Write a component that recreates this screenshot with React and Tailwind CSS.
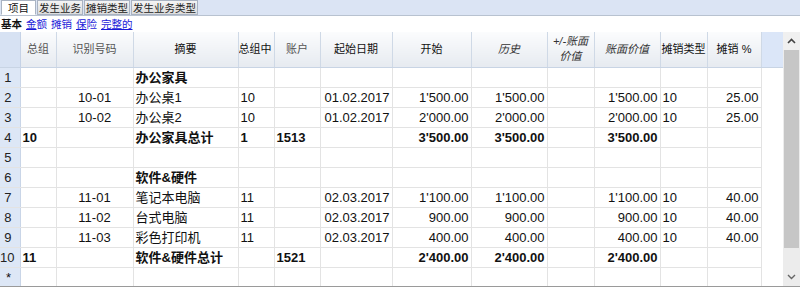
import React from 'react';

const FONT = { fontFamily: '"Liberation Sans", "Noto Sans CJK SC", Arial, sans-serif' };

const COLS = [20, 36, 77, 105, 36, 46, 72, 79, 76, 47, 66, 47, 54, 22];

const rows = [
  { n: '1', desc: '办公家具', bold: true },
  { n: '2', id: '10-01', desc: '办公桌1', g: '10', date: '01.02.2017', open: "1'500.00", hist: "1'500.00", book: "1'500.00", type: '10', pct: '25.00' },
  { n: '3', id: '10-02', desc: '办公桌2', g: '10', date: '01.02.2017', open: "2'000.00", hist: "2'000.00", book: "2'000.00", type: '10', pct: '25.00' },
  { n: '4', grp: '10', desc: '办公家具总计', g: '1', acc: '1513', open: "3'500.00", hist: "3'500.00", book: "3'500.00", total: true },
  { n: '5' },
  { n: '6', desc: '软件&硬件', bold: true },
  { n: '7', id: '11-01', desc: '笔记本电脑', g: '11', date: '02.03.2017', open: "1'100.00", hist: "1'100.00", book: "1'100.00", type: '10', pct: '40.00' },
  { n: '8', id: '11-02', desc: '台式电脑', g: '11', date: '02.03.2017', open: '900.00', hist: '900.00', book: '900.00', type: '10', pct: '40.00' },
  { n: '9', id: '11-03', desc: '彩色打印机', g: '11', date: '02.03.2017', open: '400.00', hist: '400.00', book: '400.00', type: '10', pct: '40.00' },
  { n: '10', grp: '11', desc: '软件&硬件总计', acc: '1521', open: "2'400.00", hist: "2'400.00", book: "2'400.00", total: true },
];

function Tab({ label, active }) {
  return (
    <div className={`h-[15px] text-[10.5px] leading-[14px] border border-[#a9b3c2] ${active ? 'bg-white border-b-white px-[6px]' : 'bg-gradient-to-b from-[#f4f4f4] to-[#dcdcdc] text-[#222] px-[1px]'}`}>
      {label}
    </div>
  );
}

function Hd({ children, className = '' }) {
  return (
    <th className={`h-[35px] p-0 font-normal text-[11px] leading-[15px] whitespace-nowrap overflow-hidden border-r border-[#cfd9e6] border-b border-b-[#c8d4e4] bg-gradient-to-b from-[#fbfcfd] to-[#e6eaf0] ${className}`}>
      {children}
    </th>
  );
}

function Td({ children, className = '' }) {
  return (
    <td className={`h-[20px] p-0 px-[2px] text-[13px] leading-[19px] border-r border-b border-[#e3e3e3] whitespace-nowrap overflow-hidden ${className}`}>
      {children}
    </td>
  );
}

export default function App() {
  return (
    <div className="w-[800px] h-[287px] bg-white text-[#111] overflow-hidden" style={FONT}>
      {/* tabs */}
      <div className="h-[16px] bg-[#dbe4f4] flex items-end gap-[1px] pl-[1px] border-b border-[#b8c2d0]">
        <Tab label="项目" active />
        <Tab label="发生业务" />
        <Tab label="摊销类型" />
        <Tab label="发生业务类型" />
      </div>
      <div className="h-[16px] flex items-center gap-[4px] pl-[1px] text-[10.5px] leading-[14px]">
        <span className="font-bold">基本</span>
        <span className="text-[#1a1ad8]"><u>金</u>额</span>
        <span className="text-[#1a1ad8]">摊销</span>
        <span className="text-[#1a1ad8]"><u>保</u>险</span>
        <span className="text-[#1a1ad8] underline">完整的</span>
      </div>

      <div className="flex h-[255px] border-b border-[#9a9a9a]">
        <div className="w-[783px] overflow-hidden">
          <table className="table-fixed border-collapse w-[783px]">
            <colgroup>
              {COLS.map((w, i) => <col key={i} style={{ width: w }} />)}
            </colgroup>
            <thead>
              <tr>
                <th className="p-0 bg-[#d7e2f3] border-r border-[#c5d2e6] border-b border-b-[#c8d4e4]" />
                <Hd className="text-[#555]">总组</Hd>
                <Hd className="text-[#555]">识别号码</Hd>
                <Hd className="font-bold">摘要</Hd>
                <Hd className="text-left">总组中</Hd>
                <Hd className="text-[#555]">账户</Hd>
                <Hd className="font-bold">起始日期</Hd>
                <Hd className="font-bold">开始</Hd>
                <Hd className="italic text-[#333]">历史</Hd>
                <Hd className="italic text-[#333]">+/-账面<br />价值</Hd>
                <Hd className="italic text-[#333]">账面价值</Hd>
                <Hd>摊销类型</Hd>
                <Hd>摊销 %</Hd>
                <th className="p-0 bg-[#dbe6f8] border-b border-[#c8d4e4]" />
              </tr>
            </thead>
            <tbody>
              {rows.map((r) => {
                const b = r.total ? 'font-bold' : '';
                return (
                  <tr key={r.n}>
                    <Td className="bg-[#dde7f6] text-[#222] text-right !pl-0 !pr-[8px] border-r-[#c9d5e7]">{r.n}</Td>
                    <Td className={b}>{r.grp}</Td>
                    <Td className="text-center">{r.id}</Td>
                    <Td className={r.bold || r.total ? 'font-bold' : ''}>{r.desc}</Td>
                    <Td className={b}>{r.g}</Td>
                    <Td className={b}>{r.acc}</Td>
                    <Td className="text-right">{r.date}</Td>
                    <Td className={`text-right ${b}`}>{r.open}</Td>
                    <Td className={`text-right ${b}`}>{r.hist}</Td>
                    <Td />
                    <Td className={`text-right ${b}`}>{r.book}</Td>
                    <Td>{r.type}</Td>
                    <Td className="text-right">{r.pct}</Td>
                    <Td className="border-b-0 border-r-0" />
                  </tr>
                );
              })}
              <tr>
                <Td className="bg-[#dde7f6] text-[10px] !px-[6px] border-r-[#c9d5e7] h-[18px]">*</Td>
                {COLS.slice(1).map((_, i) => (
                  <Td key={i} className={i === COLS.length - 2 ? 'border-b-0 border-r-0' : 'border-b-0'} />
                ))}
              </tr>
            </tbody>
          </table>
        </div>
        {/* scrollbar */}
        <div className="w-[17px] flex flex-col bg-[#ececec]">
          <div className="h-[18px] flex items-center justify-center bg-[#f0f0f0]">
            <svg width="9" height="6" viewBox="0 0 9 6"><path d="M1 5 L4.5 1.5 L8 5" fill="none" stroke="#444" strokeWidth="1.6" /></svg>
          </div>
          <div className="h-[198px] bg-[#c6c6c6] mx-[1px]" />
          <div className="flex-1" />
          <div className="h-[18px] flex items-center justify-center">
            <svg width="9" height="6" viewBox="0 0 9 6"><path d="M1 1 L4.5 4.5 L8 1" fill="none" stroke="#666" strokeWidth="1.4" /></svg>
          </div>
        </div>
      </div>
    </div>
  );
}
